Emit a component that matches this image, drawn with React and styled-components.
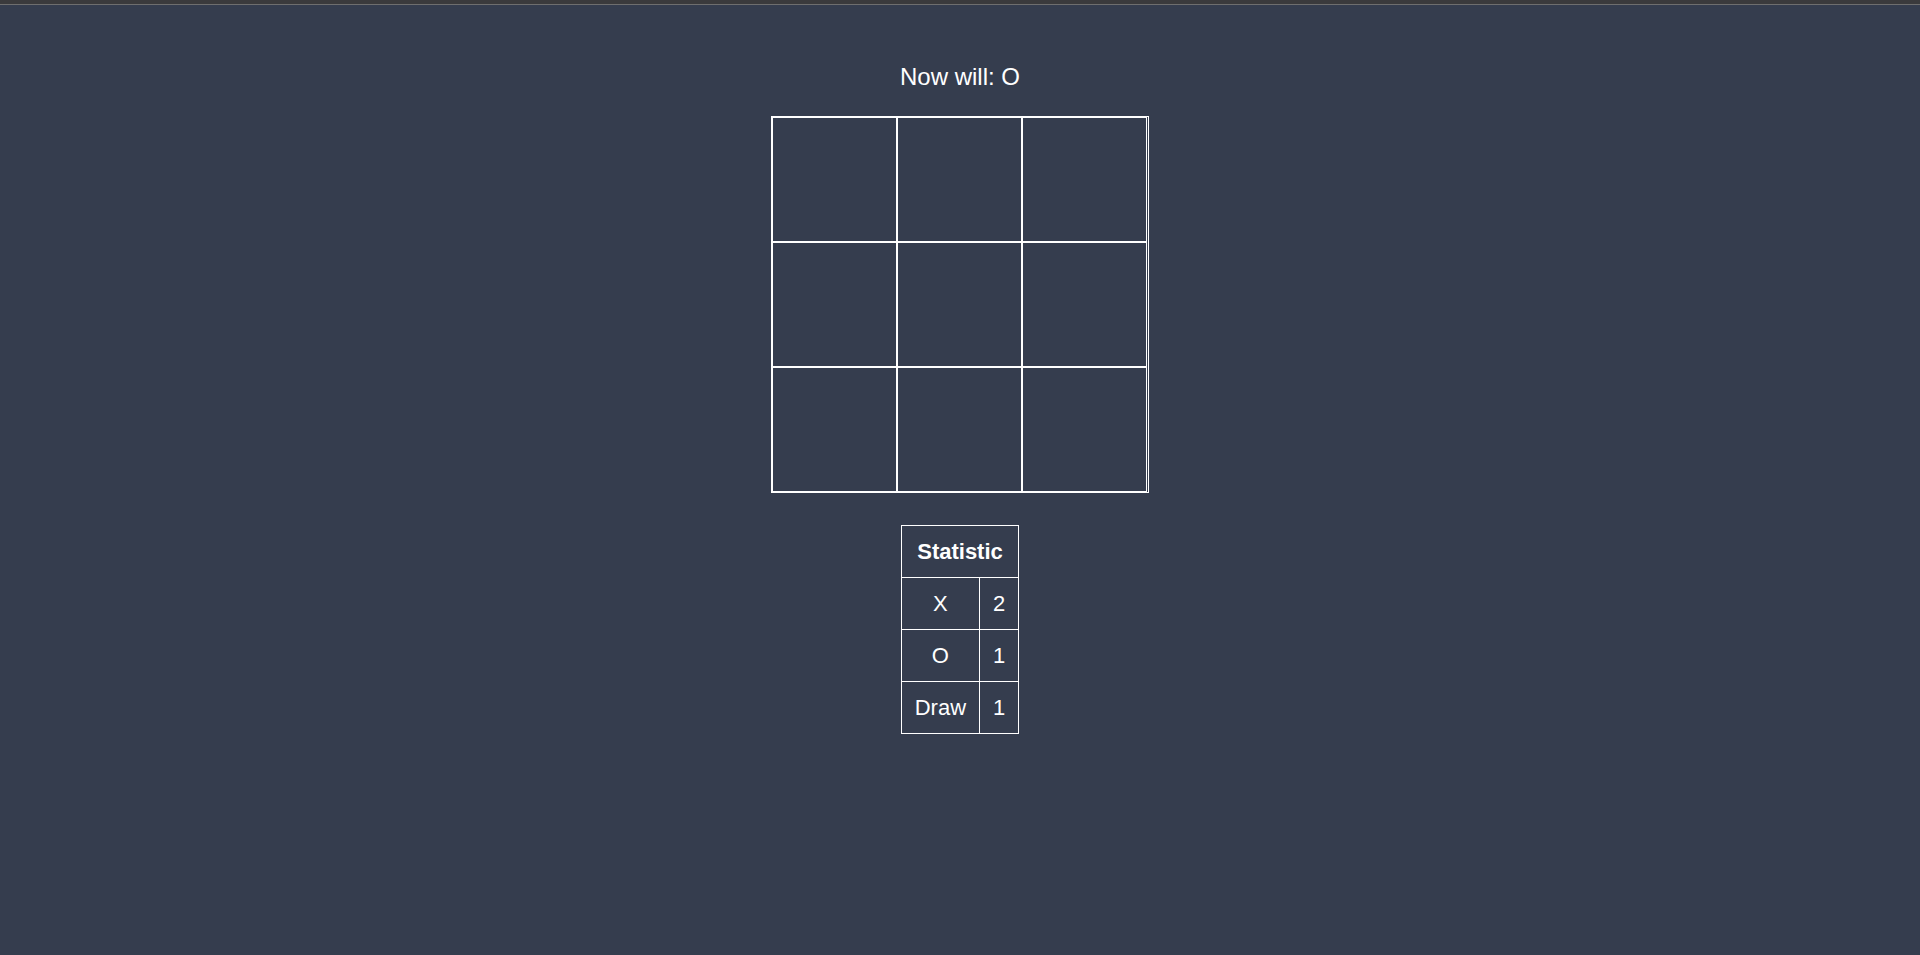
import React from "react";
import styled, { createGlobalStyle } from "styled-components";

const GlobalStyle = createGlobalStyle`
  html, body {
    margin: 0;
    padding: 0;
    background: #353d4e;
    font-family: "Liberation Sans", Arial, sans-serif;
    color: #ffffff;
  }
  * { box-sizing: border-box; }
`;

const TopStrip = styled.div`
  height: 5px;
  background: #3a3a3c;
  border-bottom: 1px solid #6e6e6e;
`;

const Page = styled.main`
  display: flex;
  flex-direction: column;
  align-items: center;
  min-height: 950px;
`;

const Status = styled.h2`
  margin: 58px 0 0;
  font-size: 24px;
  line-height: 28px;
  font-weight: normal;
  color: #ffffff;
`;

const Board = styled.div`
  margin-top: 25px;
  width: 378px;
  border: 1px solid #ffffff;
  display: flex;
  flex-wrap: wrap;
`;

const Cell = styled.button`
  width: 125px;
  height: 125px;
  border: 1px solid #ffffff;
  background: transparent;
  padding: 0;
  margin: 0;
  color: #ffffff;
  font-family: inherit;
  font-size: 64px;
  cursor: pointer;
`;

const StatTable = styled.table`
  margin-top: 32px;
  border-collapse: collapse;
  font-size: 22px;
  line-height: 25px;
  color: #ffffff;
`;

const HeadCell = styled.th`
  border: 1px solid #ffffff;
  padding: 13px;
  font-weight: bold;
  text-align: center;
`;

const DataCell = styled.td`
  border: 1px solid #ffffff;
  padding: 13px;
  text-align: center;
`;

const stats = [
  ["X", 2],
  ["O", 1],
  ["Draw", 1],
];

export default function App() {
  const cells = Array.from({ length: 9 }, () => "");
  return (
    <>
      <GlobalStyle />
      <TopStrip />
      <Page>
        <Status>Now will: O</Status>
        <Board>
          {cells.map((v, i) => (
            <Cell key={i}>{v}</Cell>
          ))}
        </Board>
        <StatTable>
          <thead>
            <tr>
              <HeadCell colSpan={2}>Statistic</HeadCell>
            </tr>
          </thead>
          <tbody>
            {stats.map(([name, count]) => (
              <tr key={name}>
                <DataCell>{name}</DataCell>
                <DataCell>{count}</DataCell>
              </tr>
            ))}
          </tbody>
        </StatTable>
      </Page>
    </>
  );
}
